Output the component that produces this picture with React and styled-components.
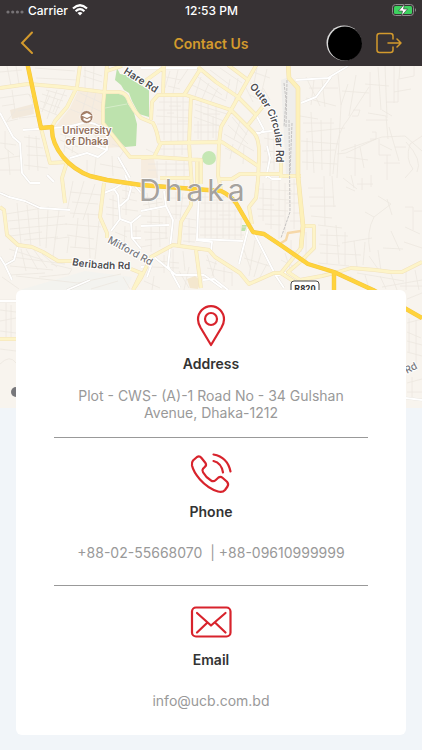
import styled, { createGlobalStyle } from "styled-components";

const GlobalStyle = createGlobalStyle`
  *, *::before, *::after {
    box-sizing: border-box;
    margin: 0;
    padding: 0;
  }

  body {
    background: #f1f5f9;
    color: #333;
    font-family: Inter, "Liberation Sans", sans-serif;
    font-size: 14px;
  }

  svg {
    display: block;
  }
`;

const Header = styled.header`
  background: #373234;
`;

const StatusBar = styled.div`
  display: grid;
  grid-template-columns: 1fr auto 1fr;
  align-items: center;
  height: 20px;
  padding: 0 5px 0 6px;
  color: #fff;
  font-size: 12px;
  font-weight: 500;
`;

const StatusGroup = styled.div`
  display: flex;
  align-items: center;
  gap: 4px;
  justify-content: ${(props) => (props.$end ? "flex-end" : "flex-start")};
`;

const NavBar = styled.nav`
  display: grid;
  grid-template-columns: 1fr auto 1fr;
  align-items: center;
  height: 46px;
  padding: 0 20px;
`;

const NavTitle = styled.h1`
  color: #d39a2d;
  font-size: 14px;
  font-weight: 600;
`;

const NavActions = styled.div`
  display: flex;
  align-items: center;
  justify-content: flex-end;
  gap: 14px;
`;

const IconButton = styled.button`
  display: flex;
  justify-self: start;
  border: none;
  background: none;
  color: #d39a2d;
  cursor: pointer;
`;

const MapView = styled.div`
  height: 342px;
  background: #f8f4ee;

  svg {
    width: 100%;
    height: 100%;
  }
`;

const Card = styled.main`
  position: relative;
  margin: -118px 16px 15px;
  padding: 0 38px 2px;
  background: #fff;
  border-radius: 6px;
`;

const ContactItem = styled.section`
  display: flex;
  flex-direction: column;
  align-items: center;
  padding-top: 15px;
  text-align: center;

  &:not(:last-child) {
    border-bottom: 1px solid #999;
  }
`;

const ContactTitle = styled.h2`
  margin-top: 6px;
  color: #333;
  font-size: 14px;
  font-weight: 600;
  line-height: 22px;
`;

const ContactBody = styled.div`
  display: flex;
  align-items: center;
  justify-content: center;
  min-height: 62px;
  padding-bottom: 4px;
  color: #999;
  font-size: 14px;
  line-height: 17px;
  white-space: pre-wrap;

  a {
    color: inherit;
    text-decoration: none;
  }
`;

const Address = styled.address`
  max-width: 290px;
  font-style: normal;
`;

const arterial =
  "M27 62L41 128L52 127Q51 142 63 157Q74 170 90 176L107 180L141 185L221 191Q230 195 236 203L253 232L264 234L282 246L308 264L334 272L373 290L422 318M334 272V292";

const ringRoad = "M288 62L289 78L298 88V176L303 226L301 248";

const streets = [
  "M0 88L28 84L63 87L103 92H119Q127 93 129 101L134 110L141 118L153 123Q157 130 159 143",
  "M107 65L103 107V123L130 157H154L201 160V184",
  "M80 65L77 87L67 107L55 121L52 127",
  "M41 128L50 163L67 162L62 178L65 203",
  "M107 71L122 66M141 84L163 68L164 65L163 93",
  "M151 120L152 102L158 95H186L231 110L254 133Q260 140 259 158L258 180L256 198L249 207L252 224",
  "M201 68L184 95M198 67L216 82L238 97L256 115",
  "M258 62L231 110L221 127L219 143L218 175L221 190",
  "M228 65L248 80M264 105L248 125",
  "M191 97L189 143L192 188M197 160V188",
  "M141 158L154 157L161 143L222 142L258 166",
  "M160 178H192M218 179H232L240 174H281",
  "M281 150V178M281 176H301",
  "M0 207L4 210L7 235L18 245L32 247L43 252L58 261H72",
  "M131 269L141 273L133 290",
  "M133 290L141 278L151 257L173 245L209 250L215 257L240 273L249 284L274 273L281 273L301 248L303 225",
  "M191 189V205L181 222L179 245M196 250L201 288",
  "M104 183L100 217L107 233V238",
  "M303 226H314V248L301 261L288 272L300 280L322 276L338 272L351 268L375 270L391 272H402L422 262",
  "M281 273L295 282M0 339H16",
];

const lanes = [
  "M0 113L13 137L20 143L22 173L30 183H40",
  "M23 130L67 127L87 122L95 124L107 130L118 142",
  "M70 158L87 153L98 157L107 150V133M118 157L130 178M107 150L85 142L83 137",
  "M0 193L9 197L25 201L40 208L70 210M18 245L14 260L5 265L0 257M5 265L12 280",
  "M67 290L90 280M47 175L54 182",
  "M256 115L264 130M256 133L278 130M264 130L259 134",
  "M296 80L328 78L348 66M301 103L316 97L331 77",
  "M104 193L114 189L118 195L120 219L131 223L132 238L141 249M125 175L131 188L128 199L120 206M114 189L122 184M120 219L111 231M132 238H141M131 223L141 215M135 186L141 193",
  "M141 211L166 206L173 220L168 266L180 288M164 191L166 206M141 226L169 225M154 257L176 275H204",
  "M199 189L197 239L243 241M248 229L239 264M250 225L276 276L284 288M196 240L212 242L211 250M204 275L222 288M203 280L214 279L228 290",
  "M0 301H16M406 398L422 400M266 175L272 179H281M141 267L151 266L147 277M141 68H201",
  "M266 178L270 158L267 146M276 276L288 272",
];

// side streets, drawn hairline thin
const alleys = [
  "M0 72L22 70M35 68L75 71M36 78L79 80M7 66L11 86M16 66L19 84M0 98L28 94L35 99M12 90L15 111L7 121M29 94L37 112M18 111L39 107M2 106L15 104M19 118L39 116M5 122L18 119",
  "M49 90L42 112M57 90L47 119M65 90L55 114M42 94L63 101M40 101L60 108M40 108L57 115M46 90L67 96M50 95L44 108M58 99L53 112",
  "M84 70L102 76M83 76L102 82M80 93L102 103M76 100L102 112M70 109L94 119M88 91L82 112M96 92L90 118M85 67V88M94 66L93 90",
  "M24 137L40 139M26 146L43 148M27 155L47 156M29 135V170M36 136L38 171M24 165L48 168M5 131V148L14 155M0 143L16 145M0 159L20 156M8 150L10 175M0 170H22",
  "M60 134L82 140M60 140L78 147M66 133L64 152M75 132L72 153M90 128L88 140M96 130V147M64 146L80 155M112 144L125 149L119 158M112 156L113 176M100 164L127 169M87 160V174M96 158L94 176",
  "M148 164H189M148 170H190M157 161V180M166 161V183M176 161V185M184 161V186M146 149L154 153M160 149H188M164 145V155M174 145V156M182 145V155",
  "M159 102H189M157 110H189M156 116L190 118M157 124H189M158 132H188M164 97V140M171 97V141M177 97L178 142M183 97V141M169 106H181M167 113H174M178 121H188",
  "M195 104L227 114M195 110L224 121M194 117L222 127M194 125H219M194 132H218M201 99V140M208 101V141M216 104V140M198 121V139M213 116V138M203 114H220",
  "M170 71L165 88M178 70L173 93M188 69L178 84M166 77L181 80M168 86L180 89M195 76L188 93M201 77L195 96M209 83L202 99M218 88L210 103M192 85L226 101M198 77L222 95",
  "M210 70L230 85M220 68L242 83M230 79L226 99M238 78L234 103M250 83L264 92M253 72L270 78M257 68L254 83M267 69L261 95M245 86L253 102M263 88L270 100M250 95L264 102",
  "M232 117L247 135M228 125L248 144M224 134L254 151M240 121L234 139M248 130L238 150M225 148L253 162M233 144L230 159M244 146L243 164M264 138L280 141M264 151L278 152M268 133V170M274 133V170M262 162H280",
  "M6 214L49 207M8 221L65 216M10 229L67 224M10 236L42 232M17 203L21 244M27 205L31 246M38 208L40 246M48 209L46 248M59 210L53 257M24 240L58 237M21 249L26 271M26 249L38 270M34 250L47 268M42 254L57 267M12 257L65 264M10 266L53 270M9 275L45 273M51 264L72 269L69 274L39 277M9 249L43 260",
  "M73 181L67 211M84 181L73 218M95 184L83 220M70 192L101 195M72 202L98 204M70 213L101 215M65 224L101 227M67 235L94 239M78 218L75 248M88 213L90 258M99 221L95 259M54 239L69 237L67 253M70 247L95 249",
  "M109 199L119 202M106 207L119 209M106 214L120 216M113 195V228M122 190L135 193M122 198L137 201M122 209L138 211M126 182V215M115 232L127 237M112 242L130 249M125 226L124 249M136 226V244M124 231H141",
  "M142 197L162 199M143 205L163 202M147 193L150 211M156 191L157 208M142 216L171 217M144 232L167 233M145 240L168 238M151 211V252M159 210L160 247M166 216V239M141 247L152 245M147 222L163 223",
  "M170 198H189M170 206H188M176 192V219M183 193L180 219M171 214L181 215M183 226L196 228M183 234H196M183 241L195 242M189 218V243M183 218L196 220",
  "M201 197H228M201 203H234M200 211H238M200 219H243M200 227H246M200 235H244M205 192V238M211 192V240M217 192V239M223 196V238M229 201V240M235 209V239M241 218V238M209 200H220M219 215H231",
  "M158 261L179 263M164 255V273M173 249V272M183 251L185 271M152 267L179 268M207 255L214 277M216 261L212 276M224 267V282M232 272V286M207 268L232 273M206 260L217 264M243 247L251 270M255 240L249 276M261 253L254 277M267 264L260 277M244 258L269 266",
  "M259 189L292 191M259 198L289 200M257 209L288 211M258 216H284M263 183V221M271 181V229M279 180V239M285 183V234M265 224L281 225M263 205H274",
  "M288 184H299M287 194H300M286 203H301M293 213H302M290 221H302M294 179V229M287 251H302M291 240V262M306 232V260M281 260L293 266M285 253L290 269",
  "M306 77L320 106M314 80L311 105M322 80L325 107M309 88H338M306 98L336 106M338 74L341 105L337 178M348 84L341 105M342 91L369 93M356 75L349 116M370 72V107M378 67L381 110M365 84L389 86M385 65L387 118",
  "M394 66V103M400 66L399 79L414 76V66M394 92L411 89M398 79V102H386M300 116L318 119M303 123H334M306 132L345 128M301 141L339 144M302 151L335 150M311 112L314 173M321 120L322 170M331 118L330 176M302 162L337 164M307 138V170",
  "M369 87L347 121Q336 132 333 174M353 110H360L358 116H352M368 113L386 116L388 139M366 120H388M382 110L392 116M341 151L382 137L405 136L422 151M337 154L346 153L376 139M372 132H376V139H370M389 127L399 161M391 155H379V139M395 147H406",
  "M422 136L410 144Q405 159 413 169L405 178M406 142Q423 160 417 172M380 144L392 150M355 144V176M346 157L368 160M360 147L364 168M384 163H400M387 155V180",
  "M324 176L325 226M332 176L334 207M308 188H323M309 197H334M310 206H336M311 216L332 218M343 178L357 189M351 175L354 188M362 178V190M371 175V187M357 184H373M346 187L355 191",
  "M378 196L391 204L374 217Q366 232 370 252M387 199L392 215M374 217L365 212M405 207H413V230M414 211H422M405 227L420 234M404 242L422 248M391 231L400 251M383 248L403 249",
  "M318 225L342 228M320 235L348 236M319 244L340 246M327 229V264M336 225L339 264M345 232V265M320 253L361 255M318 263L349 266M354 241L357 267M365 242L363 265M342 243L372 238M369 256L378 269M378 250L381 271",
  "M318 282V292M350 276L360 283M365 275L368 285M380 276L386 289M391 274L397 290M406 271V290M357 273L404 281M382 287L422 280M415 270L419 290M400 286H422",
  "M407 299L422 293M407 323L422 319M407 332L421 338M409 318V352M416 320V365M407 341L422 345M407 352L422 356M407 383L422 379M407 392H422M412 377V397M0 310L16 312M0 321L16 318M0 331L16 333M6 303V341M11 305V338M0 349L16 351M0 364Q10 354 16 363",
  "M16 276L78 283L121 274M91 289L118 281M2 277L19 289M123 277L130 289M144 281L160 288M154 276L152 290M179 271L189 288M189 267L184 290",
];

const parks = [
  "M117 68L115 80L121 85L124 90L129 93L132 101L139 114L149 117V90L137 83L126 75L120 74Z",
  "M105 94L119 94Q126 95 128 104L134 113L137 124L136 146L125 147L115 137L104 123Z",
  "M242 225H247L245 231H241Z",
];

const MapLabel = styled.text`
  font-family: Inter, sans-serif;
  font-size: 10px;
  font-weight: ${(props) => (props.$muted ? 500 : 600)};
  fill: ${(props) => (props.$place ? "#92705c" : props.$muted ? "#77777b" : "#4c4c50")};
  text-anchor: ${(props) => (props.$place ? "middle" : "start")};
  stroke: #fff;
  stroke-width: 2px;
  paint-order: stroke;
`;

function DhakaMap() {
  return (
    <svg
      viewBox="0 66 422 342"
      preserveAspectRatio="xMidYMin slice"
      role="img"
      aria-label="Map of Dhaka"
      fill="none"
      strokeLinejoin="round"
    >
      <defs>
        <path id="outerCircular" d="M249 87Q276 114 276 150V172" />
        <path id="hareRoad" d="M123 73L165 99" />
        <path id="beribadh" d="M72 265Q95 270 140 269" />
        <path id="mitford" d="M107 242L162 272" />
      </defs>

      <rect y="66" width="422" height="342" fill="#f8f4ee" />
      <path d="M10 110L33 104L34 114L12 119Z" fill="#f2e9dc" />
      <path d="M70 108L78 91L103 94V122L123 147L104 148L92 133L55 127Z" fill="#f6ecdf" />
      <path d="M141 159H154L158 178H141Z" fill="#f6ecdf" />
      <path d="M187 279L195 276L201 281L198 289L190 288Z" fill="#f4e7ce" />
      <path d="M281 80L289 77L296 88V174H286Z" fill="#efeeeb" />
      <path d="M20 290L85 271L132 277L127 290Z" fill="#f3f3ef" />
      {parks.map((d) => (
        <path key={d} d={d} fill="#bde2ad" />
      ))}
      <circle cx="209" cy="158" r="7" fill="#c5e7b4" />
      <path d="M105 108L127 104" stroke="#d6edc9" />

      <path d={alleys.join("")} stroke="#ece7df" strokeWidth=".8" />
      <path d={lanes.join("")} stroke="#e3dfd9" strokeWidth="2.6" />
      <path d={lanes.join("")} stroke="#fff" strokeWidth="1.9" />
      <path d={streets.join("")} stroke="#f2e2bb" strokeWidth="3.9" />
      <path d={streets.join("")} stroke="#fdf4c8" strokeWidth="2.8" />
      <path d={ringRoad} stroke="#f2dfab" strokeWidth="4.6" />
      <path d={ringRoad} stroke="#fdf1ba" strokeWidth="3.600" />
      <path d="M281 243L286 240L288 233L301 231" stroke="#f6d8a8" strokeWidth="2.5" />
      <path
        d="M284 83L286 100L284 127M287 80L286 127M289 120L290 212L281 238M292 123L290 173"
        stroke="#c5c3c2"
        strokeWidth="1"
        strokeDasharray="3 1"
      />
      <path d={arterial} stroke="#f3c63f" strokeWidth="4.4" />
      <path d={arterial} stroke="#ffd33c" strokeWidth="3.4" />

      <MapLabel>
        <textPath href="#outerCircular">Outer Circular Rd</textPath>
      </MapLabel>
      <MapLabel>
        <textPath href="#hareRoad">Hare Rd</textPath>
      </MapLabel>
      <MapLabel>
        <textPath href="#beribadh">Beribadh Rd</textPath>
      </MapLabel>
      <MapLabel $muted>
        <textPath href="#mitford">Mitford Rd</textPath>
      </MapLabel>
      <MapLabel $muted x="407" y="374" transform="rotate(-28 407 374)">
        Rd
      </MapLabel>
      <MapLabel $place x="87" y="134">
        University
      </MapLabel>
      <MapLabel $place x="87" y="145">
        of Dhaka
      </MapLabel>
      <circle cx="86.500" cy="117" r="6.500" fill="#a37f68" stroke="#fff" strokeWidth=".8" />
      <path
        d="M81.500 115.500L87 113L92 115.500L87 118ZM83.500 117.500V120L87 121.500L90.500 120V117.500L87 119.200Z"
        fill="#fff"
      />

      <text
        x="139"
        y="201"
        fontFamily="Inter, sans-serif"
        fontSize="30"
        letterSpacing="4"
        fill="#a5a29e"
        stroke="#fff"
        strokeWidth="1"
        paintOrder="stroke"
      >
        Dhaka
      </text>

      <rect x="291" y="281" width="28" height="15" rx="3" fill="#fff" stroke="#4a4a4a" />
      <text
        x="305"
        y="292"
        textAnchor="middle"
        fontFamily="Roboto, sans-serif"
        fontSize="9"
        fontWeight="700"
        fill="#333"
      >
        R820
      </text>
      <circle cx="16" cy="392" r="5" fill="#77777b" />
    </svg>
  );
}

function PinIcon() {
  return (
    <svg width="42" height="42" fill="none" stroke="#d8232c" strokeWidth="2.200" strokeLinejoin="round">
      <path d="M21 40L10.500 22.500Q8 18 8 14.500A13 13.300 0 0 1 34 14.500Q34 18 31.500 22.500Z" />
      <circle cx="21" cy="14" r="6" />
    </svg>
  );
}

function PhoneIcon() {
  return (
    <svg
      width="42"
      height="42"
      fill="none"
      stroke="#d8232c"
      strokeWidth="2.200"
      strokeLinecap="round"
      strokeLinejoin="round"
    >
      <path d="M3 7.500L7 4Q9.500 2.500 11.500 5L15.500 10Q16.800 12 15 13.800L13 15.800Q11.800 17.300 13 19.200Q16 24.500 21 27.500Q23.500 29 25.500 27.200L28.500 24.500Q30.500 23 32.500 24.800L37 28.800Q39 31 37.500 33.500L35 37Q32.500 39.800 28 38.500Q18 35.500 10 26.500Q3.500 19 2 12.500Q1.500 9.300 3 7.500Z" />
      <path d="M23.500 8Q31.500 10 33 19.500M23.500 1.500Q37.500 4 40.500 18.500" />
    </svg>
  );
}

function MailIcon() {
  return (
    <svg width="42" height="42" fill="none" stroke="#d8232c" strokeWidth="2.200" strokeLinecap="round">
      <rect x="2" y="6.500" width="38.500" height="29" rx="4" />
      <path d="M7 12L21 24.500L35.500 12M7 31.500L17.500 21.500M35.500 31.500L25 21.500" strokeLinejoin="round" />
    </svg>
  );
}

const contacts = [
  {
    title: "Address",
    icon: <PinIcon />,
    body: <Address>Plot - CWS- (A)-1 Road No - 34 Gulshan Avenue, Dhaka-1212</Address>,
  },
  {
    title: "Phone",
    icon: <PhoneIcon />,
    body: (
      <p>
        <a href="tel:+88-02-55668070">+88-02-55668070</a>
        {"  | "}
        <a href="tel:+88-09610999999">+88-09610999999</a>
      </p>
    ),
  },
  {
    title: "Email",
    icon: <MailIcon />,
    body: <a href="mailto:info@ucb.com.bd">info@ucb.com.bd</a>,
  },
];

export default function App() {
  return (
    <>
      <GlobalStyle />
      <Header>
        <StatusBar>
          <StatusGroup>
            <svg width="18" height="12" fill="#777376">
              <circle cx="2" cy="8" r="1.600" />
              <circle cx="6.700" cy="8" r="1.600" />
              <circle cx="11.400" cy="8" r="1.600" />
              <circle cx="16" cy="8" r="1.600" />
            </svg>
            <span>Carrier</span>
            <svg width="16" height="12" viewBox="0 0 16 12" fill="none" stroke="#fff" strokeWidth="2.200">
              <path d="M1 4.500Q8 -2 15 4.500M3.600 7.200Q8 3.200 12.400 7.200" />
              <path d="M5.500 9Q8 7 10.500 9L8 11.500Z" fill="#fff" stroke="none" />
            </svg>
          </StatusGroup>
          <span>12:53 PM</span>
          <StatusGroup $end>
            <svg width="25" height="12">
              <rect x=".5" y=".5" width="21" height="11" rx="3" fill="none" stroke="#8e8b8d" />
              <rect x="2" y="2" width="18" height="8" rx="1.500" fill="#3dd15f" />
              <path d="M23 4Q25 6 23 8Z" fill="#8e8b8d" />
              <path
                d="M12.500 0L6.500 7H10.500L9.500 12L15.500 5H11.500Z"
                fill="#fff"
                stroke="#373234"
                strokeWidth=".6"
              />
            </svg>
          </StatusGroup>
        </StatusBar>
        <NavBar>
          <IconButton aria-label="Back">
            <svg width="14" height="24" fill="none" stroke="currentColor" strokeWidth="2" strokeLinecap="round">
              <path d="M12 1.500L2 12L12 22" />
            </svg>
          </IconButton>
          <NavTitle>Contact Us</NavTitle>
          <NavActions>
            <IconButton aria-label="Profile">
              <svg width="36" height="36">
                <circle cx="18" cy="18" r="17.500" fill="#d9d9d9" />
                <circle cx="19" cy="18.500" r="17" fill="#000" />
              </svg>
            </IconButton>
            <IconButton aria-label="Log out">
              <svg
                width="26"
                height="22"
                fill="none"
                stroke="currentColor"
                strokeWidth="1.500"
                strokeLinecap="round"
                strokeLinejoin="round"
              >
                <path d="M17 7V4Q17 1.500 14.500 1.500H3.500Q1 1.500 1 4V18Q1 20.500 3.500 20.500H14.500Q17 20.500 17 18V15M12 11H25M21 7L25 11L21 15" />
              </svg>
            </IconButton>
          </NavActions>
        </NavBar>
      </Header>
      <MapView>
        <DhakaMap />
      </MapView>
      <Card>
        {contacts.map((contact) => (
          <ContactItem key={contact.title}>
            {contact.icon}
            <ContactTitle>{contact.title}</ContactTitle>
            <ContactBody>{contact.body}</ContactBody>
          </ContactItem>
        ))}
      </Card>
    </>
  );
}
